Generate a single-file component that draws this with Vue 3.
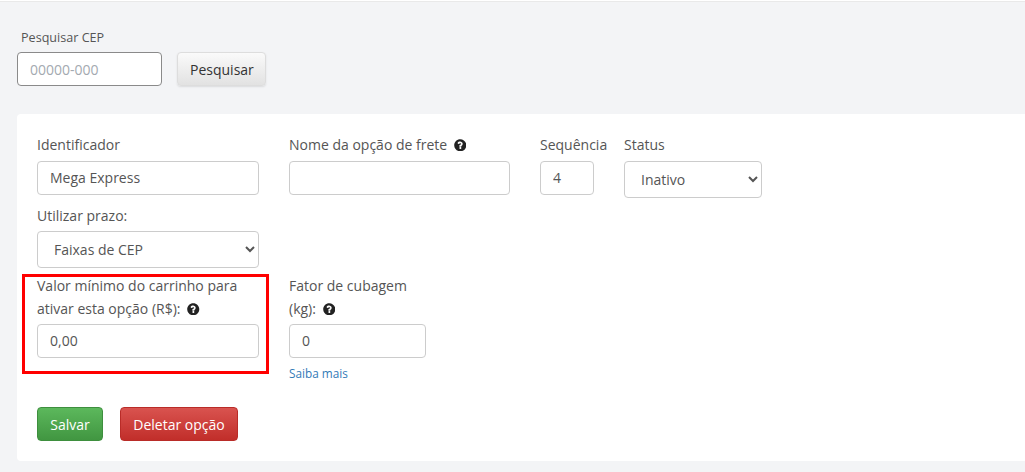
<script setup>
const helpPath = 'M256 8C119 8 8 119 8 256s111 248 248 248 248-111 248-248S393 8 256 8zm5 398c-23 0-41-18-41-41s18-41 41-41 41 18 41 41-18 41-41 41zm42-110v5c0 7-5 12-12 12h-62c-7 0-12-5-12-12v-9c0-36 27-50 48-62 18-10 29-17 29-30 0-18-23-29-41-29-24 0-35 11-50 31-4 5-12 6-17 2l-37-28c-5-4-6-11-3-16 25-36 56-57 105-57 50 0 104 39 104 91 0 69-52 77-52 102z'
</script>

<template>
  <div class="page">
    <section class="search">
      <label class="search-label">Pesquisar CEP</label>
      <div class="search-row">
        <input class="search-input" placeholder="00000-000" />
        <button class="btn btn-default">Pesquisar</button>
      </div>
    </section>

    <section class="card">
      <div class="row row-first">
        <div class="field w-222">
          <label>Identificador</label>
          <input class="ctl" value="Mega Express" />
        </div>
        <div class="field w-221">
          <label>Nome da opção de frete
            <svg class="help" viewBox="0 0 512 512"><path :d="helpPath" /></svg>
          </label>
          <input class="ctl" />
        </div>
        <div class="field w-54">
          <label>Sequência</label>
          <input class="ctl" value="4" />
        </div>
        <div class="field w-138">
          <label>Status</label>
          <select class="ctl sel"><option>Inativo</option></select>
        </div>
      </div>

      <div class="row row-second">
        <div class="field w-222">
          <label>Utilizar prazo:</label>
          <select class="ctl sel"><option>Faixas de CEP</option></select>
        </div>
      </div>

      <div class="row row-third">
        <div class="field w-222">
          <label class="two-line">Valor mínimo do carrinho para ativar esta opção (R$):
            <svg class="help" viewBox="0 0 512 512"><path :d="helpPath" /></svg>
          </label>
          <input class="ctl" value="0,00" />
          <span class="red-box"></span>
        </div>
        <div class="field w-137">
          <label class="two-line">Fator de cubagem (kg):
            <svg class="help" viewBox="0 0 512 512"><path :d="helpPath" /></svg>
          </label>
          <input class="ctl" value="0" />
          <a class="more" href="#">Saiba mais</a>
        </div>
      </div>

      <div class="actions">
        <button class="btn btn-save">Salvar</button>
        <button class="btn btn-delete">Deletar opção</button>
      </div>
    </section>
  </div>
</template>

<style scoped>
.page {
  box-sizing: border-box;
  width: 1025px;
  height: 472px;
  overflow: hidden;
  background: #f3f4f6;
  border-top: 1px solid #fff;
  font-family: "Open Sans", "Liberation Sans", sans-serif;
  color: #555;
  box-shadow: inset 0 1px 0 #e9e9e9;
}
.search {
  box-sizing: border-box;
  padding: 28px 0 0 17px;
  height: 113px;
}
.search-label {
  display: block;
  font-size: 12.6px;
  line-height: 18px;
  margin: 0 0 5px 4px;
  color: #555;
}
.search-row {
  display: flex;
  gap: 15px;
}
.search-input {
  box-sizing: border-box;
  width: 145px;
  height: 34px;
  padding: 0 12px;
  border: 1px solid #8a8a8a;
  border-radius: 4px;
  background: #fff;
  font: 14px "Open Sans", sans-serif;
}
.search-input::placeholder {
  color: #a3a9b0;
  opacity: 1;
}
.btn {
  box-sizing: border-box;
  height: 34px;
  padding: 0 12px;
  border-radius: 4px;
  font: 14px "Open Sans", sans-serif;
}
.btn-default {
  width: 89px;
  color: #333;
  border: 1px solid #ddd;
  background: linear-gradient(#fafafa, #e2e2e2);
  box-shadow: 0 1px 2px rgba(0, 0, 0, 0.1);
}
.card {
  box-sizing: border-box;
  height: 347px;
  margin-left: 17px;
  padding: 19px 20px;
  background: #fff;
  border-radius: 4px 0 0 4px;
}
.row {
  display: flex;
  gap: 30px;
  align-items: flex-start;
}
.row-first { height: 71px; }
.row-first label { margin-bottom: 5px; }
.row-second { height: 71px; }
.row-third { height: 132px; }
.field {
  position: relative;
  display: flex;
  flex-direction: column;
}
.w-222 { width: 222px; }
.w-221 { width: 221px; }
.w-137 { width: 137px; }
.w-138 { width: 138px; }
.w-54 { width: 54px; }
label {
  display: block;
  font-size: 14px;
  line-height: 23px;
  color: #555;
  margin-bottom: 4px;
}
.two-line {
  min-height: 46px;
  margin-top: -1px;
  margin-bottom: 4px;
}
.ctl {
  box-sizing: border-box;
  width: 100%;
  height: 34px;
  padding: 0 12px 2px;
  border: 1px solid #ccc;
  border-radius: 4px;
  background: #fff;
  color: #555;
  font: 14px "Open Sans", sans-serif;
}
.sel {
  height: 37px;
  padding: 0 12px;
}
.help {
  width: 12.5px;
  height: 12.5px;
  margin-left: 3px;
  vertical-align: -1px;
  fill: #222;
}
.red-box {
  position: absolute;
  left: -15px;
  top: -1px;
  width: 247px;
  height: 100px;
  box-sizing: border-box;
  border: 3px solid #f00;
  pointer-events: none;
}
.more {
  font-size: 11.8px;
  line-height: 16px;
  margin-top: 7px;
  color: #337ab7;
  text-decoration: none;
}
.actions {
  display: flex;
  gap: 17px;
}
.btn-save {
  width: 66px;
  color: #fff;
  border: 1px solid #3e8f3e;
  background: linear-gradient(#5cb85c, #419641);
}
.btn-delete {
  width: 118px;
  color: #fff;
  border: 1px solid #b92c28;
  background: linear-gradient(#d9534f, #c12e2a);
}
</style>
